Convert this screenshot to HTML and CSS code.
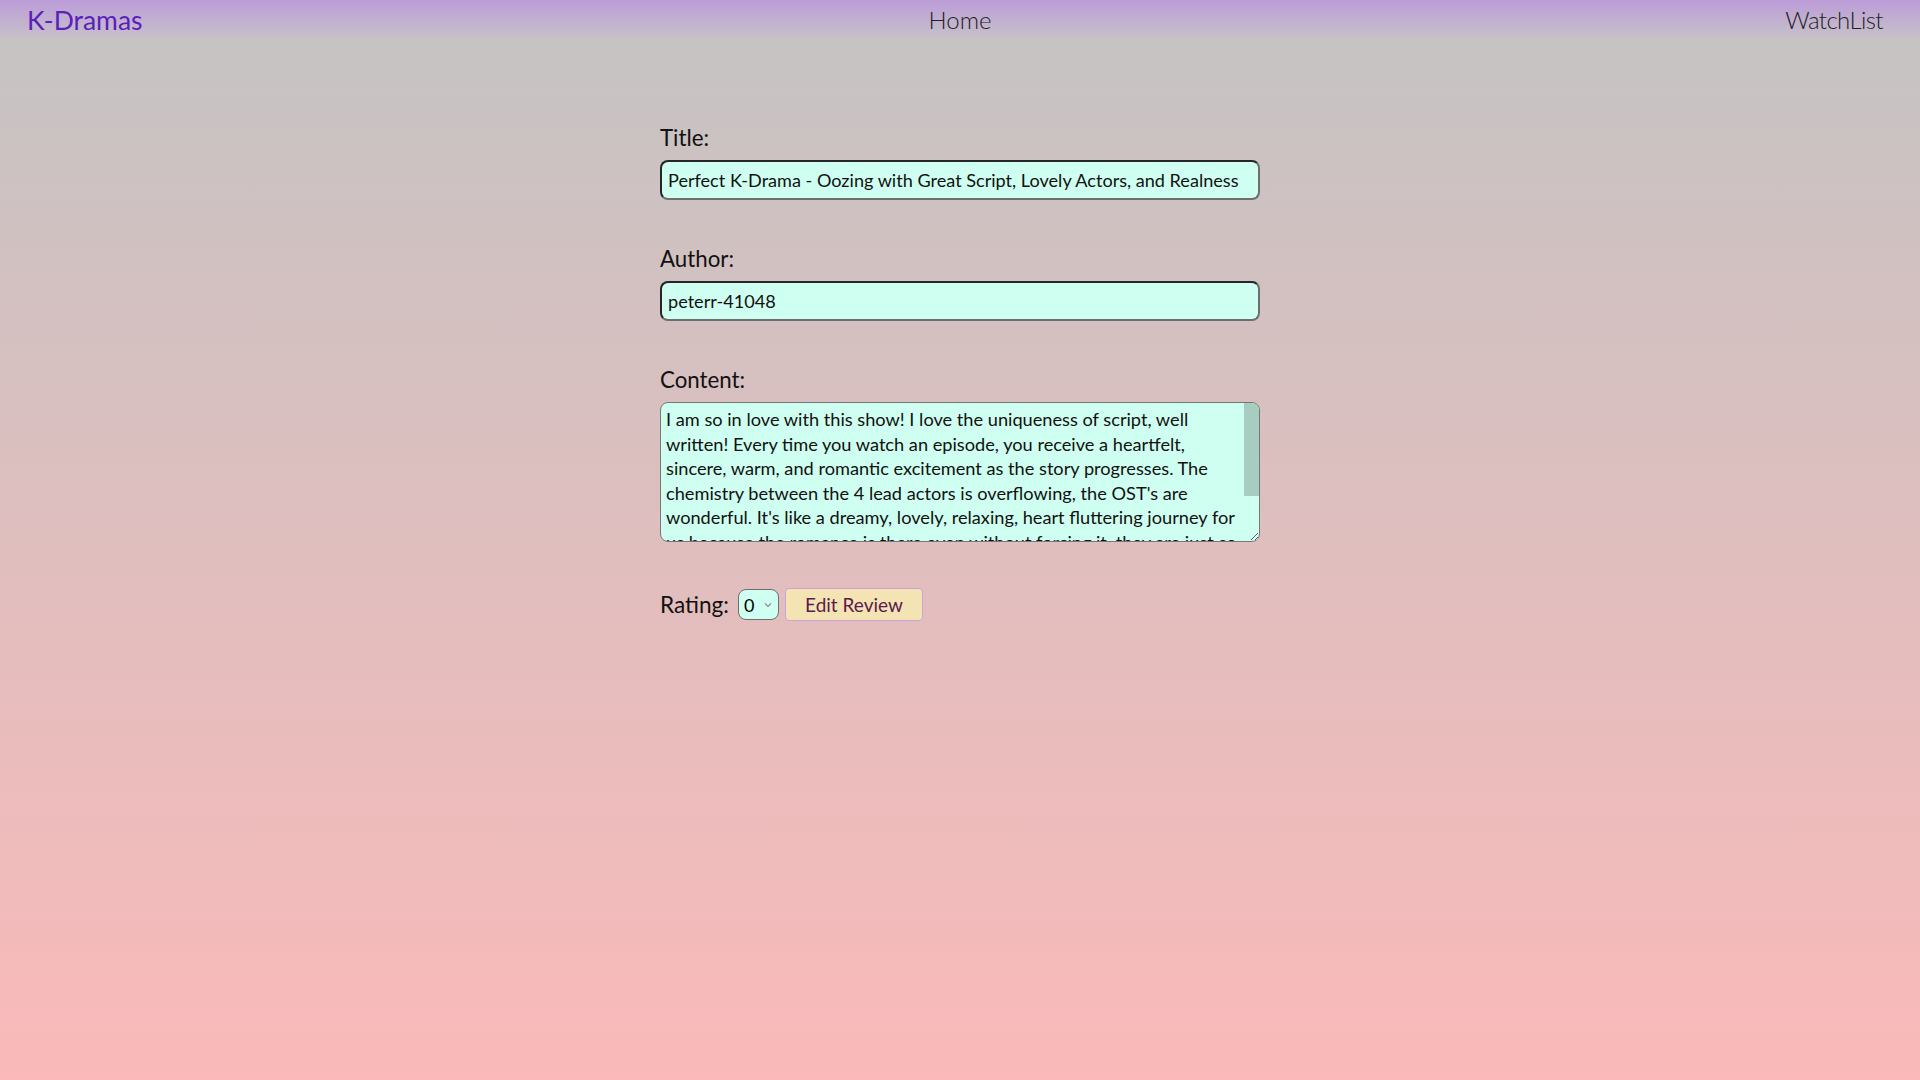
FILE: index.html
```html
<!DOCTYPE html>
<html lang="en">
<head>
<meta charset="utf-8">
<title>K-Dramas - Edit Review</title>
<link rel="stylesheet" href="styles.css">
</head>
<body>
<nav class="navbar">
  <div class="nav-left"><a class="brand" href="#">K-Dramas</a></div>
  <div class="nav-center"><a class="nav-link" href="#">Home</a></div>
  <div class="nav-right"><a class="nav-link watch" href="#">WatchList</a></div>
</nav>
<main class="page">
  <form class="review-form">
    <label class="field-label" for="title">Title:</label>
    <input class="text-input" id="title" type="text" value="Perfect K-Drama - Oozing with Great Script, Lovely Actors, and Realness">
    <label class="field-label" for="author">Author:</label>
    <input class="text-input" id="author" type="text" value="peterr-41048">
    <label class="field-label" for="content">Content:</label>
    <div class="ta-wrap">
      <textarea class="text-area" id="content">I am so in love with this show! I love the uniqueness of script, well written! Every time you watch an episode, you receive a heartfelt, sincere, warm, and romantic excitement as the story progresses. The chemistry between the 4 lead actors is overflowing, the OST's are wonderful. It's like a dreamy, lovely, relaxing, heart fluttering journey for us because the romance is there even without forcing it, they are just so natural together. I highly recommend this drama!</textarea>
      <div class="ta-thumb"></div>
    </div>
    <div class="rating-row">
      <label class="rating-label" for="rating">Rating:</label>
      <div class="select-wrap">
        <select class="rating-select" id="rating">
          <option>0</option><option>1</option><option>2</option><option>3</option><option>4</option><option>5</option>
        </select>
        <svg class="chev" width="8" height="6" viewBox="0 0 8 6"><path d="M1 1.5 L4 4.5 L7 1.5" fill="none" stroke="#8a8a8a" stroke-width="1.1"/></svg>
      </div>
      <button class="edit-btn" type="button">Edit Review</button>
    </div>
  </form>
</main>
</body>
</html>
```
FILE: styles.css
```css
html, body {
  margin: 0;
  padding: 0;
}
body {
  min-height: 100vh;
  font-family: Lato, "Noto Sans", sans-serif;
  color: #111;
  background: linear-gradient(to bottom, #c6c3c3 0px, #c6c3c3 40px, #fbb9b9 100%);
}
.navbar {
  height: 40px;
  display: grid;
  grid-template-columns: 1fr auto 1fr;
  align-items: center;
  padding: 0;
  background: linear-gradient(to bottom, #bc9cd8 0%, #c5bdca 85%, #c6c3c3 100%);
}
.nav-left {
  padding-left: 27px;
}
.nav-right {
  text-align: right;
  padding-right: 37px;
}
.navbar a {
  text-decoration: none;
  line-height: 40px;
}
.brand {
  color: #5b1fbb;
  font-weight: 400;
  font-size: 26.5px;
}
.nav-link {
  color: #222;
  font-weight: 300;
  font-size: 24px;
}
.watch {
  letter-spacing: -0.6px;
}
.review-form {
  width: 600px;
  margin: 0 auto;
  padding-top: 85px;
  display: flex;
  flex-direction: column;
}
.field-label {
  font-size: 22.3px;
  line-height: 26px;
  margin-bottom: 9px;
  color: #111;
}
.text-input {
  box-sizing: border-box;
  width: 100%;
  height: 40px;
  margin: 0 0 46px 0;
  padding: 0 6px;
  font-family: inherit;
  font-size: 18.1px;
  color: #111;
  background: #cffff0;
  border: 2px solid;
  border-color: #262626 #6e6e6e #6e6e6e #262626;
  border-radius: 8px;
  outline: none;
}
.ta-wrap {
  position: relative;
  height: 140px;
  margin: 0 0 46px 0;
}
.text-area {
  display: block;
  box-sizing: border-box;
  width: 100%;
  height: 140px;
  margin: 0;
  padding: 4px 14px 2px 5px;
  font-family: inherit;
  font-size: 18.2px;
  line-height: 24.6px;
  color: #111;
  background: #cffff0;
  border: 1px solid #777;
  border-radius: 8px;
  resize: vertical;
  outline: none;
  overflow: hidden;
}
.ta-thumb {
  position: absolute;
  top: 1px;
  right: 1px;
  width: 15px;
  height: 93px;
  background: #a6cdc0;
  border-top-right-radius: 7px;
  pointer-events: none;
}
.rating-row {
  display: flex;
  align-items: center;
  height: 33px;
}
.rating-label {
  font-size: 22.6px;
  margin-right: 9px;
}
.select-wrap {
  position: relative;
  display: flex;
  margin-right: 6px;
}
.rating-select {
  appearance: none;
  -webkit-appearance: none;
  width: 41px;
  height: 31px;
  padding: 0 0 0 5px;
  font-family: inherit;
  font-size: 18px;
  color: #000;
  background: #cffff0;
  border: 1px solid #6e6e6e;
  border-radius: 8px;
  outline: none;
}
.chev {
  position: absolute;
  right: 7px;
  top: 13px;
  pointer-events: none;
}
.edit-btn {
  box-sizing: border-box;
  width: 138px;
  height: 33px;
  padding: 0;
  font-family: inherit;
  font-size: 19px;
  color: #5a1a4e;
  background: #f5e4b3;
  border: 1px solid #c9a3d9;
  border-radius: 4px;
}
```
